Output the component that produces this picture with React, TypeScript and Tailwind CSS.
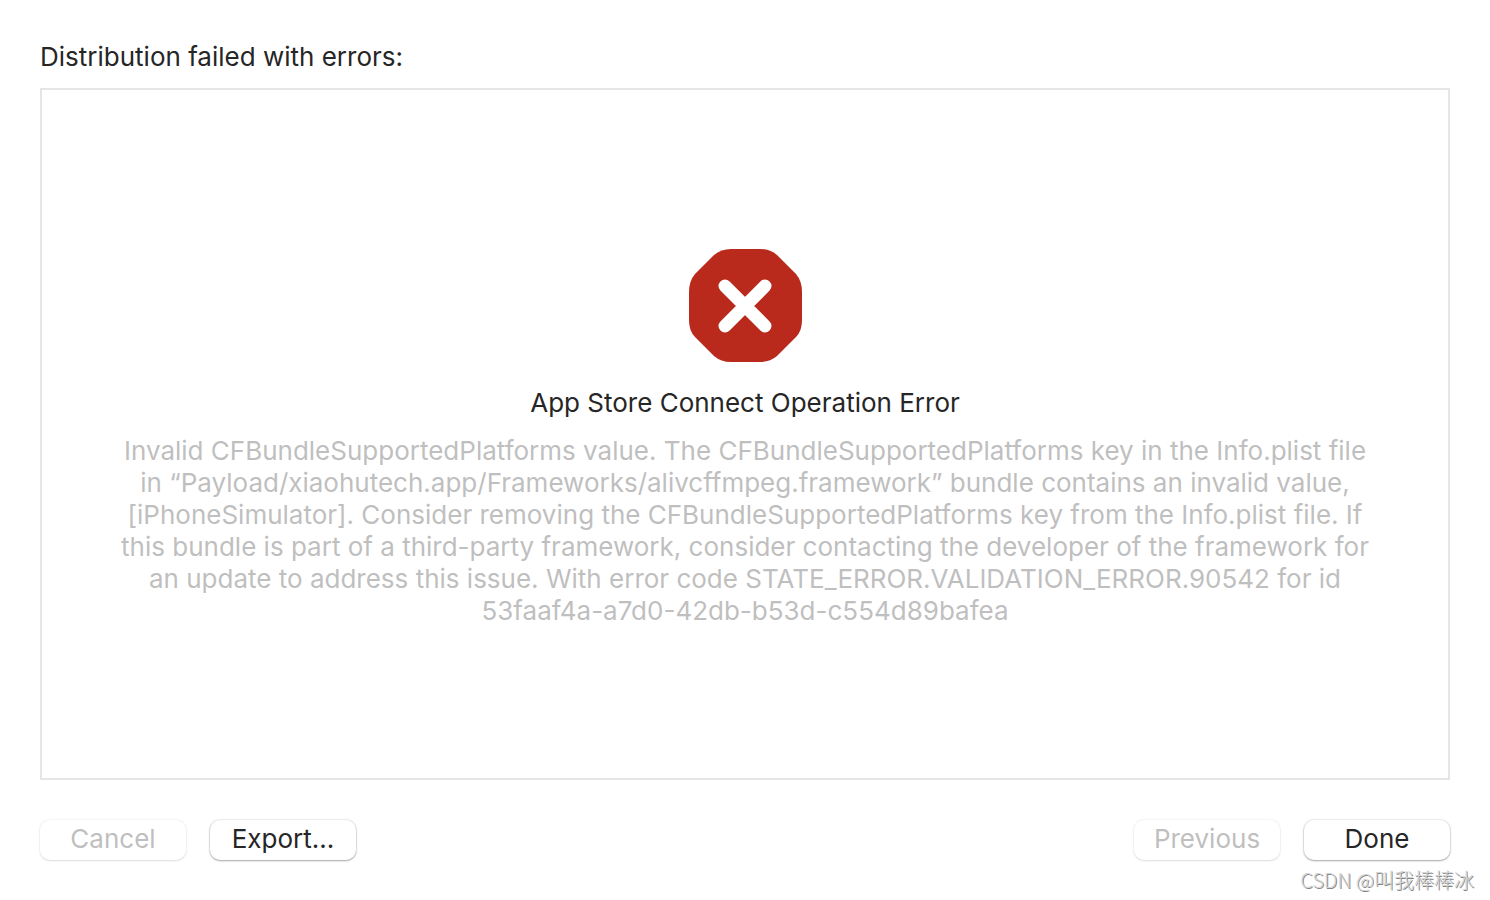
import type { ButtonHTMLAttributes } from "react";

function DialogButton({ children, ...props }: ButtonHTMLAttributes<HTMLButtonElement>) {
  return (
    <button
      type="button"
      className="flex h-10 w-[146px] items-center justify-center rounded-[10px] bg-white pb-0.5 text-[26px] leading-8 text-[#262626] shadow-[0_0_1px_1px_rgba(0,0,0,0.07),0_1px_2px_rgba(0,0,0,0.3)] active:bg-gray-100 disabled:text-[#bfbfbf] disabled:shadow-[0_0_1px_1px_rgba(0,0,0,0.04),0_1px_2px_rgba(0,0,0,0.1)]"
      {...props}
    >
      {children}
    </button>
  );
}

function ErrorIcon() {
  return (
    <svg viewBox="0 0 114 114" className="size-[114px] shrink-0" aria-hidden="true">
      <path
        d="M43 0H72Q82 0 89 6L108 25Q114 32 114 43V71Q114 82 108 88L89 107Q82 113 72 113H43Q33 113 26 107L7 88Q1 82 1 71V43Q1 32 7 25L26 6Q33 0 43 0Z"
        fill="#b9291c"
      />
      <path d="M37 37L77 77M77 37L37 77" stroke="#fff" strokeWidth="13" strokeLinecap="round" />
    </svg>
  );
}

export default function App() {
  return (
    <div className="flex min-h-screen flex-col bg-white pt-10 font-['Inter','Noto_Sans_CJK_SC',sans-serif] text-[#262626]">
      <main className="flex grow flex-col px-10">
        <h1 className="text-[26px] leading-[34px]">Distribution failed with errors:</h1>

        <section className="mt-[14px] flex grow flex-col items-center justify-center border-2 border-[#e5e5e5] px-16 pt-2 text-center">
          <ErrorIcon />
          <h2 className="mt-6 text-[26px] leading-8">App Store Connect Operation Error</h2>
          <p className="mt-4 max-w-[1256px] text-[26px] leading-8 text-[#bfbfbf]">
            Invalid CFBundleSupportedPlatforms value. The CFBundleSupportedPlatforms key in the Info.plist file
            in “Payload/xiaohutech.app/Frameworks/alivcffmpeg.framework” bundle contains an invalid value,
            [iPhoneSimulator]. Consider removing the CFBundleSupportedPlatforms key from the Info.plist file. If
            this bundle is part of a third-party framework, consider contacting the developer of the framework for
            an update to address this issue. With error code STATE_ERROR.VALIDATION_ERROR.90542 for id
            53faaf4a-a7d0-42db-b53d-c554d89bafea
          </p>
        </section>

        <div className="mt-10 flex justify-between">
          <div className="flex gap-6">
            <DialogButton disabled>Cancel</DialogButton>
            <DialogButton>Export...</DialogButton>
          </div>
          <div className="flex gap-6">
            <DialogButton disabled>Previous</DialogButton>
            <DialogButton>Done</DialogButton>
          </div>
        </div>
      </main>

      <footer className="flex h-10 items-center justify-end px-4 font-['Noto_Sans_CJK_SC',sans-serif] text-xl leading-6 font-light text-[#d4d4d4] [text-shadow:1px_1px_0_#858585]">
        CSDN @叫我棒棒冰
      </footer>
    </div>
  );
}
